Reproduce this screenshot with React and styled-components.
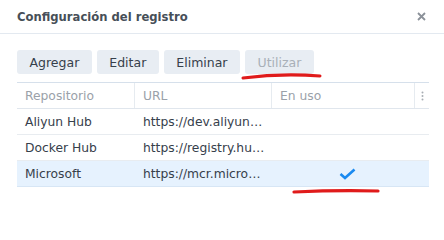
import styled, { createGlobalStyle } from "styled-components";

const GlobalStyle = createGlobalStyle`
  body {
    margin: 0;
    background: #fff;
    font-family: "DejaVu Sans", Verdana, sans-serif;
  }
`;

const registries = [
  { name: "Aliyun Hub", url: "https://dev.aliyun.com/search.html", inUse: false },
  { name: "Docker Hub", url: "https://registry.hub.docker.com", inUse: false },
  { name: "Microsoft", url: "https://mcr.microsoft.com", inUse: true },
];

export default function App() {
  return (
    <>
      <GlobalStyle />
      <Dialog>
        <Header>
          <Title>Configuración del registro</Title>
          <CloseBtn>
            <svg width="9" height="9" viewBox="0 0 9 9">
              <path d="M1 1L8 8M8 1L1 8" stroke="#8b9199" strokeWidth="1.8" />
            </svg>
          </CloseBtn>
        </Header>
        <Body>
          <Toolbar>
            <ToolBtn>Agregar</ToolBtn>
            <ToolBtn>Editar</ToolBtn>
            <ToolBtn>Eliminar</ToolBtn>
            <ToolBtn disabled>Utilizar</ToolBtn>
            <Mark width="82" height="10" viewBox="0 0 82 10" style={{ left: 224, top: 21 }}>
              <path d="M2 7 Q 40 2 79 5" stroke="#e01b1b" strokeWidth="3" fill="none" strokeLinecap="round" />
            </Mark>
          </Toolbar>
          <Grid>
            <HeadRow>
              <HeadCell>Repositorio</HeadCell>
              <HeadCell>URL</HeadCell>
              <HeadCell>En uso</HeadCell>
              <HeadCell $menu>
                <svg width="3" height="10" viewBox="0 0 3 10">
                  <circle cx="1.5" cy="1.5" r="1" fill="#a8adb3" />
                  <circle cx="1.5" cy="5" r="1" fill="#a8adb3" />
                  <circle cx="1.5" cy="8.5" r="1" fill="#a8adb3" />
                </svg>
              </HeadCell>
            </HeadRow>
            {registries.map((r) => (
              <Row key={r.name} $selected={r.inUse}>
                <Cell>{r.name}</Cell>
                <Cell $url>{r.url}</Cell>
                <Cell $center>
                  {r.inUse && (
                    <svg width="17" height="12" viewBox="0 0 17 12">
                      <path d="M1.5 6L6 10L15.5 1.5" stroke="#1a8af0" strokeWidth="2.6" fill="none" />
                    </svg>
                  )}
                </Cell>
                <Cell />
              </Row>
            ))}
            <Mark width="90" height="8" viewBox="0 0 90 8" style={{ left: 275, top: 104 }}>
              <path d="M2 5 Q 45 3 86 4" stroke="#e01b1b" strokeWidth="3.2" fill="none" strokeLinecap="round" />
            </Mark>
          </Grid>
        </Body>
      </Dialog>
    </>
  );
}

const Dialog = styled.div`
  width: 444px;
  height: 240px;
  background: #fff;
`;

const Header = styled.div`
  height: 34px;
  padding: 0 17px;
  display: flex;
  align-items: center;
  justify-content: space-between;
  border-bottom: 1px solid #e3e9f0;
  box-sizing: border-box;
`;

const Title = styled.h1`
  margin: 0;
  font-size: 11.6px;
  font-weight: bold;
  color: #474f58;
`;

const CloseBtn = styled.div`
  display: flex;
  margin-right: 1px;
  margin-top: -1px;
`;

const Body = styled.div`
  padding: 16px 15px 0 17px;
`;

const Toolbar = styled.div`
  position: relative;
  display: flex;
  gap: 5px;
`;

const ToolBtn = styled.button`
  height: 24px;
  padding: 0 12.5px;
  border: none;
  border-radius: 3px;
  background: #e8edf3;
  font-family: "DejaVu Sans", Verdana, sans-serif;
  font-size: 12.5px;
  color: #36404b;
  &:disabled {
    color: #a9b0b8;
  }
`;

const Mark = styled.svg`
  position: absolute;
  pointer-events: none;
`;

const Grid = styled.div`
  position: relative;
  margin-top: 8px;
  width: 412px;
  border-top: 1px solid #d6e0eb;
`;

const cols = "118px 137px 143px 14px";

const HeadRow = styled.div`
  display: grid;
  grid-template-columns: ${cols};
  height: 26px;
  border-bottom: 1px solid #e0e6ed;
  box-sizing: border-box;
`;

const HeadCell = styled.div`
  display: flex;
  align-items: center;
  justify-content: ${(p) => (p.$menu ? "center" : "flex-start")};
  padding: ${(p) => (p.$menu ? "0" : "0 8px")};
  font-size: 12.3px;
  color: #9aa1a9;
  border-right: ${(p) => (p.$menu ? "none" : "1px solid #e6ebf0")};
  white-space: nowrap;
  overflow: hidden;
`;

const Row = styled.div`
  display: grid;
  grid-template-columns: ${cols};
  height: 26px;
  border-bottom: 1px solid ${(p) => (p.$selected ? "#d7e6f5" : "#e8ecf0")};
  background: ${(p) => (p.$selected ? "#e6f2fe" : "transparent")};
  box-sizing: border-box;
`;

const Cell = styled.div`
  display: ${(p) => (p.$center ? "flex" : "block")};
  align-items: center;
  justify-content: center;
  padding: ${(p) => (p.$center ? "0 0 0 8px" : p.$url ? "1px 6px 0 8px" : "1px 8px 0")};
  line-height: 25px;
  font-size: 12.3px;
  color: #36404b;
  white-space: nowrap;
  overflow: hidden;
  text-overflow: ellipsis;
  min-width: 0;
`;
